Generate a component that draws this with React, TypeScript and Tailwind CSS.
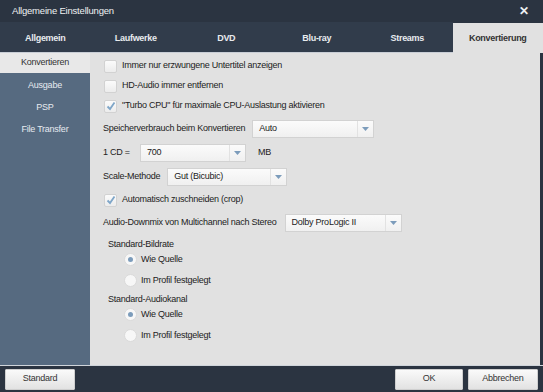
import { useState } from "react";

const tabs = ["Allgemein", "Laufwerke", "DVD", "Blu-ray", "Streams", "Konvertierung"];
const side = ["Konvertieren", "Ausgabe", "PSP", "File Transfer"];

function Check({ checked, label }: { checked?: boolean; label: string }) {
  return (
    <div className="flex h-[20px] items-center gap-[5px]">
      <div className="flex h-[13px] w-[13px] items-center justify-center rounded-[2px] border border-[#d2d2d2] bg-gradient-to-b from-[#fbfbfb] to-[#ececec]">
        {checked && (
          <svg width="10" height="10" viewBox="0 0 10 10">
            <path d="M1.5 5.5 L4 8 L8.5 1.5" stroke="#7fa6c8" strokeWidth="1.8" fill="none" />
          </svg>
        )}
      </div>
      <span>{label}</span>
    </div>
  );
}

function Select({ value, w }: { value: string; w: string }) {
  return (
    <div className={`flex h-[18px] items-center border border-[#d2d2d2] bg-gradient-to-b from-[#fbfbfb] to-[#f0f0f0] ${w}`}>
      <span className="flex-1 pl-[6px]">{value}</span>
      <div className="flex h-full w-[16px] items-center justify-center border-l border-[#e2e2e2]">
        <svg width="7" height="4" viewBox="0 0 7 4">
          <path d="M0 0 H7 L3.5 4 Z" fill="#7c9cbb" />
        </svg>
      </div>
    </div>
  );
}

function Radio({ on, label }: { on?: boolean; label: string }) {
  return (
    <div className="flex h-[21px] items-center gap-[4px] pl-[16px]">
      <div className="flex h-[13px] w-[13px] items-center justify-center rounded-full border border-[#dadada] bg-[#f7f7f7]">
        {on && <div className="h-[5px] w-[5px] rounded-full bg-[#7c9cbb]" />}
      </div>
      <span>{label}</span>
    </div>
  );
}

export default function App() {
  const [active] = useState(5);
  return (
    <div className="flex h-[392px] w-[543px] flex-col bg-[#2b3441] font-['Liberation_Sans',Arial,sans-serif] text-[9px] tracking-[-0.25px] text-[#222]">
      <div className="flex h-[22px] items-center justify-between px-[12px] text-[9.5px] tracking-[-0.2px] text-[#eef0f2]">
        <span>Allgemeine Einstellungen</span>
        <span className="pr-[2px] text-[12px] font-bold">✕</span>
      </div>
      <div className="flex h-[31px]">
        {tabs.map((t, i) =>
          i === active ? (
            <div key={t} className="mt-[1px] flex flex-1 items-center justify-center bg-[#e1e1e1] pt-[1px] font-bold tracking-[-0.3px] text-[#333]">
              {t}
            </div>
          ) : (
            <div key={t} className="flex flex-1 items-center justify-center border-b border-[#c9ced6] bg-[#313c4b] pt-[3px] font-bold tracking-[-0.3px] text-[#e8ebef]">
              {t}
            </div>
          )
        )}
      </div>
      <div className="flex h-[312px] pr-[3px]">
        <div className="flex w-[90px] flex-col bg-[#566a80] text-[#e6ebf0]">
          {side.map((s, i) => (
            <div
              key={s}
              className={
                i === 0
                  ? "mb-[2px] flex h-[20px] items-center justify-center bg-[#e8e8e8] text-[#333]"
                  : "flex h-[22px] items-center justify-center"
              }
            >
              {s}
            </div>
          ))}
        </div>
        <div className="flex flex-1 flex-col bg-[#e1e1e1] pl-[13px] pt-[3px]">
          <div className="pl-[1px]">
            <Check label="Immer nur erzwungene Untertitel anzeigen" />
            <Check label="HD-Audio immer entfernen" />
            <Check checked label={'"Turbo CPU" für maximale CPU-Auslastung aktivieren'} />
          </div>
          <div className="mt-[4px] flex items-center gap-[7px]">
            <span>Speicherverbrauch beim Konvertieren</span>
            <Select value="Auto" w="w-[122px]" />
          </div>
          <div className="mt-[6px] flex items-center">
            <span className="w-[37px]">1 CD =</span>
            <Select value="700" w="w-[106px]" />
            <span className="ml-[12px]">MB</span>
          </div>
          <div className="mt-[6px] flex items-center gap-[7px]">
            <span>Scale-Methode</span>
            <Select value="Gut (Bicubic)" w="w-[120px]" />
          </div>
          <div className="mt-[4px] pl-[1px]">
            <Check checked label="Automatisch zuschneiden (crop)" />
          </div>
          <div className="mt-[4px] flex items-center gap-[8px]">
            <span>Audio-Downmix von Multichannel nach Stereo</span>
            <Select value="Dolby ProLogic II" w="w-[117px]" />
          </div>
          <div className="mt-[9px] pl-[5px]">
            <div className="flex h-[8px] items-center">Standard-Bildrate</div>
            <Radio on label="Wie Quelle" />
            <Radio label="Im Profil festgelegt" />
            <div className="mt-[5px] flex h-[8px] items-center">Standard-Audiokanal</div>
            <Radio on label="Wie Quelle" />
            <Radio label="Im Profil festgelegt" />
          </div>
        </div>
      </div>
      <div className="flex flex-1 items-center border-t border-[#cfd4da] px-[5px]">
        <button className="h-[21px] w-[70px] rounded-[1px] border border-[#cfcfcf] bg-gradient-to-b from-[#fafafa] to-[#e2e2e2] text-[#333]">
          Standard
        </button>
        <div className="flex-1" />
        <button className="h-[21px] w-[68px] rounded-[1px] border border-[#cfcfcf] bg-gradient-to-b from-[#fafafa] to-[#e2e2e2] text-[#333]">
          OK
        </button>
        <button className="ml-[5px] h-[21px] w-[70px] rounded-[1px] border border-[#cfcfcf] bg-gradient-to-b from-[#fafafa] to-[#e2e2e2] text-[#333]">
          Abbrechen
        </button>
      </div>
    </div>
  );
}
